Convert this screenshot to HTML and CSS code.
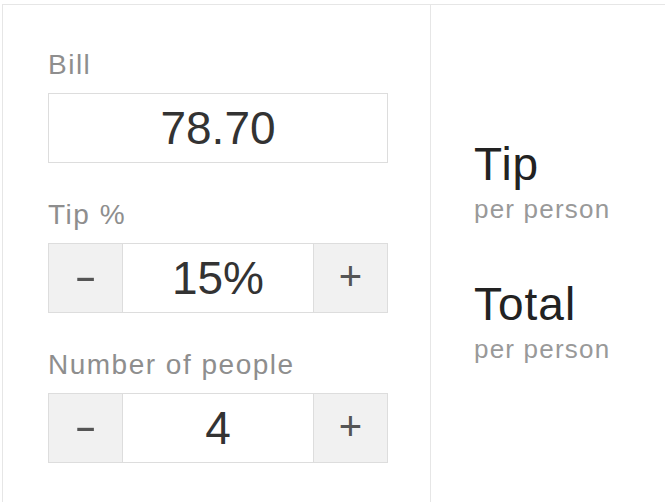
FILE: index.html
```html
<!DOCTYPE html>
<html lang="en">
<head>
    <meta charset="UTF-8">
    <meta name="viewport" content="width=device-width, initial-scale=1.0">
    <title>Tip Calculator</title>
    <link rel="stylesheet" href="styles.css">
</head>
<body>
    <div class="calc">
        <div class="inputs">
            <div class="field">
                <label class="field-label" for="bill">Bill</label>
                <input class="bill-input" type="text" id="bill" name="bill" value="78.70">
            </div>
            <div class="field">
                <div class="field-label">Tip %</div>
                <div class="stepper">
                    <button class="step-btn step-minus" type="button"><span class="minus">-</span></button>
                    <div class="step-value">15%</div>
                    <button class="step-btn step-plus" type="button">+</button>
                </div>
            </div>
            <div class="field">
                <div class="field-label">Number of people</div>
                <div class="stepper">
                    <button class="step-btn step-minus" type="button"><span class="minus">-</span></button>
                    <div class="step-value">4</div>
                    <button class="step-btn step-plus" type="button">+</button>
                </div>
            </div>
        </div>
        <div class="results">
            <div class="result">
                <div class="result-title">Tip</div>
                <div class="result-sub">per person</div>
            </div>
            <div class="result">
                <div class="result-title">Total</div>
                <div class="result-sub">per person</div>
            </div>
        </div>
    </div>
</body>
</html>
```

FILE: styles.css
```css
body {
    margin: 0;
    font-family: "Liberation Sans", Arial, sans-serif;
    background-color: #fff;
}

.calc {
    display: flex;
    height: 498px;
    margin: 4px 0 0 2px;
    border-top: 1px solid #e6e6e6;
    border-left: 1px solid #e6e6e6;
    box-sizing: border-box;
}

.inputs {
    width: 428px;
    padding: 44px 42px 0 45px;
    border-right: 1px solid #e6e6e6;
    box-sizing: border-box;
}

.field + .field {
    margin-top: 36px;
}

.field-label {
    display: block;
    font-size: 28px;
    line-height: 32px;
    letter-spacing: 1.5px;
    color: #8e8e8e;
    margin-bottom: 12px;
}

.bill-input {
    display: block;
    width: 340px;
    height: 70px;
    padding: 0;
    border: 1px solid #ddd;
    box-sizing: border-box;
    font-family: inherit;
    font-size: 46px;
    color: #333;
    text-align: center;
}

.stepper {
    display: flex;
    width: 340px;
    height: 70px;
    border: 1px solid #ddd;
    box-sizing: border-box;
}

.step-btn {
    width: 74px;
    padding: 0 0 4px;
    border: none;
    background-color: #f1f1f1;
    font-family: inherit;
    font-size: 40px;
    color: #555;
}

.step-minus {
    border-right: 1px solid #ddd;
}

.step-plus {
    border-left: 1px solid #ddd;
}

.minus {
    display: inline-block;
    transform: scaleX(1.7);
}

.step-value {
    flex: 1;
    display: flex;
    align-items: center;
    justify-content: center;
    font-size: 46px;
    color: #333;
}

.results {
    flex: 1;
    display: flex;
    flex-direction: column;
    justify-content: center;
    padding: 0 0 4px 43px;
}

.result + .result {
    margin-top: 55px;
}

.result-title {
    font-size: 46px;
    line-height: 50px;
    letter-spacing: 1px;
    color: #222;
}

.result-sub {
    margin-top: 5px;
    font-size: 26px;
    line-height: 30px;
    letter-spacing: 1.2px;
    color: #999;
}
```
